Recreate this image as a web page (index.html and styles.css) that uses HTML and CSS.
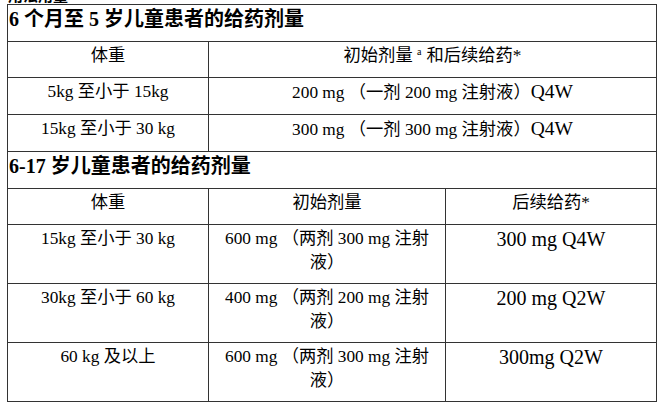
FILE: index.html
```html
<!DOCTYPE html>
<html lang="zh-CN">
<head>
<meta charset="utf-8">
<title>给药剂量</title>
<link rel="stylesheet" href="styles.css">
</head>
<body>
<div class="cut"><span>用法用量</span></div>
<table class="dose">
  <colgroup>
    <col class="c1">
    <col class="c2">
    <col class="c3">
  </colgroup>
  <tbody>
    <tr><td class="title" colspan="3">6 个月至 5 岁儿童患者的给药剂量</td></tr>
    <tr>
      <td>体重</td>
      <td colspan="2">初始剂量 <sup>a</sup>和后续给药*</td>
    </tr>
    <tr>
      <td>5kg 至小于 15kg</td>
      <td colspan="2">200 mg （一剂 200 mg 注射液）<span class="q">Q4W</span></td>
    </tr>
    <tr>
      <td>15kg 至小于 30 kg</td>
      <td colspan="2">300 mg （一剂 300 mg 注射液）<span class="q">Q4W</span></td>
    </tr>
    <tr><td class="title" colspan="3">6-17 岁儿童患者的给药剂量</td></tr>
    <tr>
      <td>体重</td>
      <td>初始剂量</td>
      <td>后续给药*</td>
    </tr>
    <tr class="two">
      <td>15kg 至小于 30 kg</td>
      <td>600 mg （两剂 300 mg 注射液）</td>
      <td class="big">300 mg Q4W</td>
    </tr>
    <tr class="two">
      <td>30kg 至小于 60 kg</td>
      <td>400 mg （两剂 200 mg 注射液）</td>
      <td class="big">200 mg Q2W</td>
    </tr>
    <tr class="two">
      <td>60 kg 及以上</td>
      <td>600 mg （两剂 300 mg 注射液）</td>
      <td class="big">300mg Q2W</td>
    </tr>
  </tbody>
</table>
</body>
</html>
```
FILE: styles.css
```css
html, body {
  margin: 0;
  padding: 0;
  background: #ffffff;
}

body {
  font-family: "Liberation Serif", "Noto Sans CJK SC", serif;
  color: #000000;
}

.cut {
  height: 4px;
  overflow: hidden;
  display: flex;
  align-items: flex-end;
  padding-left: 8px;
}

.cut span {
  font-size: 15px;
  line-height: 15px;
  font-weight: bold;
  display: block;
}

.dose {
  border-collapse: collapse;
  table-layout: fixed;
  width: 650px;
  margin-left: 7px;
  font-size: 17.3px;
  line-height: 24px;
}

.c1 { width: 201px; }
.c2 { width: 237px; }
.c3 { width: 211px; }

.dose td {
  border: 1px solid #333333;
  padding: 2px 7px 9px;
  text-align: center;
  vertical-align: top;
}

.dose td.title {
  text-align: left;
  font-weight: bold;
  font-size: 20px;
  padding: 2px 2px 10px 1px;
}

.dose td.big {
  font-size: 20px;
}

.dose .q {
  font-size: 19.5px;
}

.dose tr.two td {
  padding-bottom: 8px;
}

.dose sup {
  font-size: 10px;
  line-height: 0;
  vertical-align: 6px;
  margin-right: 5px;
}
```
